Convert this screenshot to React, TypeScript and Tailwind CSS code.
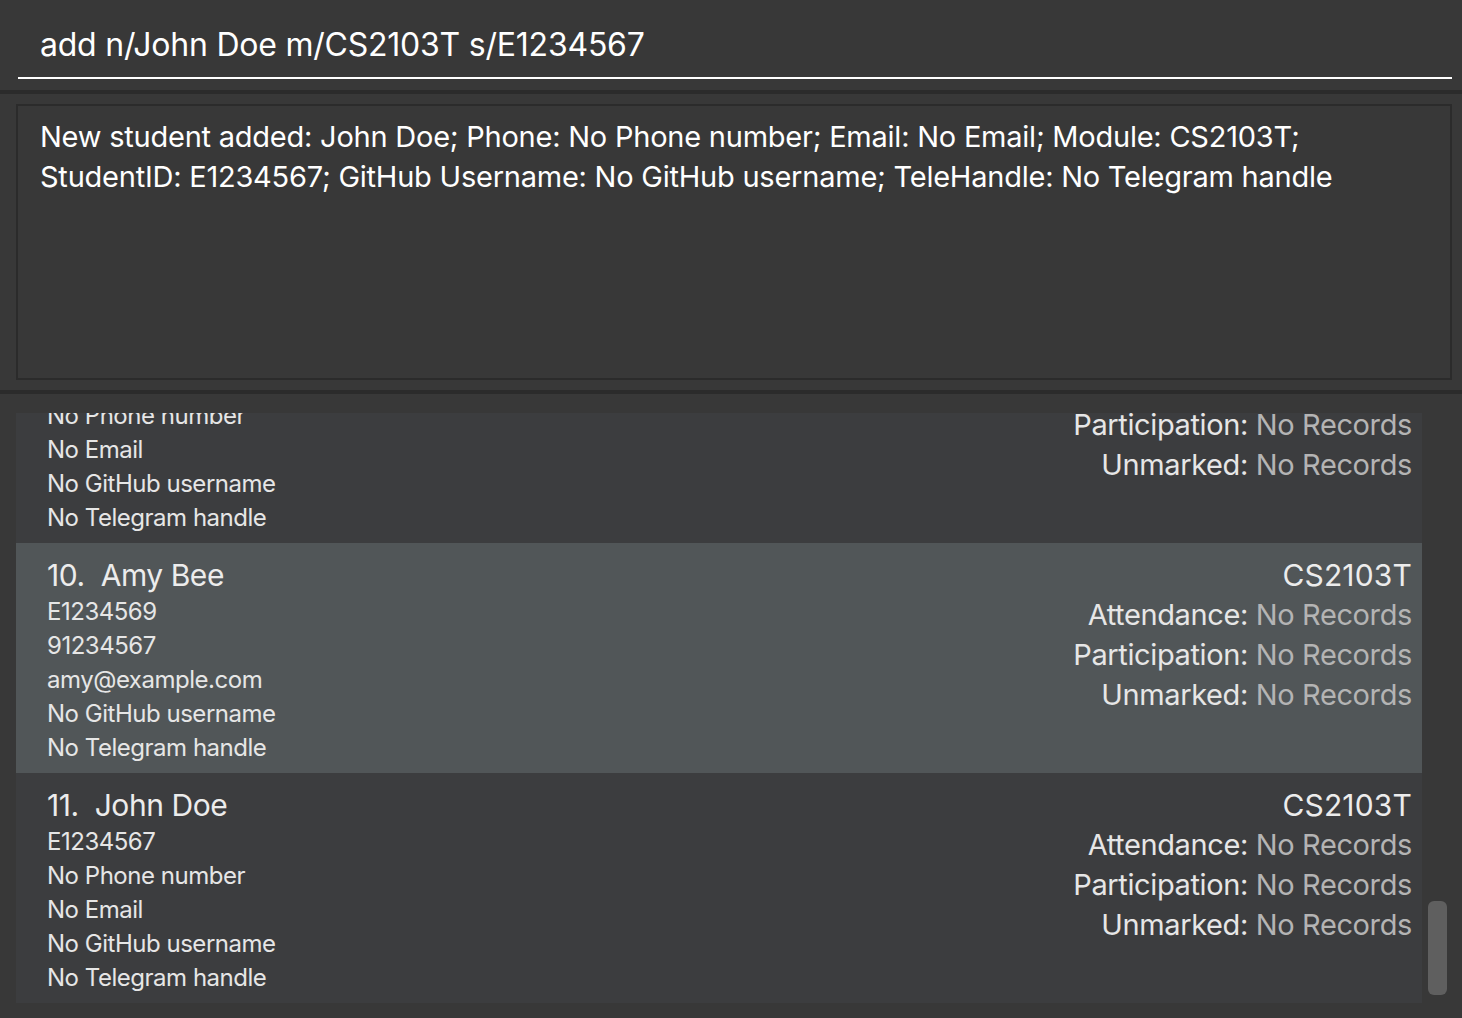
import React from 'react';

type Student = {
  index: number;
  name: string;
  id: string;
  phone: string;
  email: string;
  github: string;
  tele: string;
  module: string;
  selected?: boolean;
};

const students: Student[] = [
  {
    index: 9,
    name: "Bernice Yu",
    id: "E1234568",
    phone: "No Phone number",
    email: "No Email",
    github: "No GitHub username",
    tele: "No Telegram handle",
    module: "CS2103T",
  },
  {
    index: 10,
    name: "Amy Bee",
    id: "E1234569",
    phone: "91234567",
    email: "amy@example.com",
    github: "No GitHub username",
    tele: "No Telegram handle",
    module: "CS2103T",
    selected: true,
  },
  {
    index: 11,
    name: "John Doe",
    id: "E1234567",
    phone: "No Phone number",
    email: "No Email",
    github: "No GitHub username",
    tele: "No Telegram handle",
    module: "CS2103T",
  },
];

const records = ["Attendance", "Participation", "Unmarked"];

const StudentCard = ({ s }: { s: Student }) => {
  return (
    <div
      className={`flex justify-between shrink-0 h-[230px] pt-[12px] pl-[31px] pr-[10px] ${
        s.selected ? "bg-[#515658]" : "bg-[#3c3d3f]"
      }`}
    >
      <div className="flex flex-col">
        <div className="text-[30px] leading-[40px] text-[#ececec] tracking-[-0.015em]">
          {s.index}.&nbsp;&nbsp;{s.name}
        </div>
        {[s.id, s.phone, s.email, s.github, s.tele].map((line, i) => (
          <div key={i} className="text-[24px] leading-[34px] text-[#e6e6e6] tracking-[-0.02em]">
            {line}
          </div>
        ))}
      </div>
      <div className="flex flex-col items-end">
        <div className="text-[30px] leading-[40px] text-[#ececec] tracking-[0.005em]">{s.module}</div>
        {records.map((r) => (
          <div key={r} className="text-[29px] leading-[40px] tracking-[-0.013em]">
            <span className="text-[#e6e6e6]">{r}: </span>
            <span className="text-[#b4b4b4]">No Records</span>
          </div>
        ))}
      </div>
    </div>
  );
};

export default function App() {
  return (
    <div
      className="w-[1462px] h-[1018px] bg-[#383838] flex flex-col overflow-hidden"
      style={{ fontFamily: "Inter, 'Noto Sans', sans-serif" }}
    >
      {/* command box */}
      <div className="h-[90px] pl-[18px] pr-[10px] pt-[22px]">
        <div className="border-b-2 border-white h-[57px] pl-[22px] pt-[1px] text-[32px] leading-[44px] text-white tracking-[-0.007em]">
          add n/John Doe m/CS2103T s/E1234567
        </div>
      </div>
      <div className="h-[4px] bg-[#2b2b2b]" />

      {/* result display */}
      <div className="h-[296px] pt-[10px] pl-[16px] pr-[10px]">
        <div className="h-[276px] border-2 border-[#2b2b2b] pt-[11px] pl-[22px] text-[29px] leading-[40px] text-white tracking-[-0.008em]">
          New student added: John Doe; Phone: No Phone number; Email: No Email; Module: CS2103T;
          <br />
          StudentID: E1234567; GitHub Username: No GitHub username; TeleHandle: No Telegram handle
        </div>
      </div>
      <div className="h-[4px] bg-[#2b2b2b]" />

      {/* student list */}
      <div className="flex pt-[19px] pl-[16px] h-[609px]">
        <div className="w-[1406px] h-[590px] flex flex-col justify-end overflow-hidden">
          {students.map((s) => (
            <StudentCard key={s.index} s={s} />
          ))}
        </div>
        <div className="flex-1 flex flex-col justify-end pb-[8px] pl-[6px]">
          <div className="w-[19px] h-[94px] rounded-[6px] bg-[#5f5f5f]" />
        </div>
      </div>
    </div>
  );
}
